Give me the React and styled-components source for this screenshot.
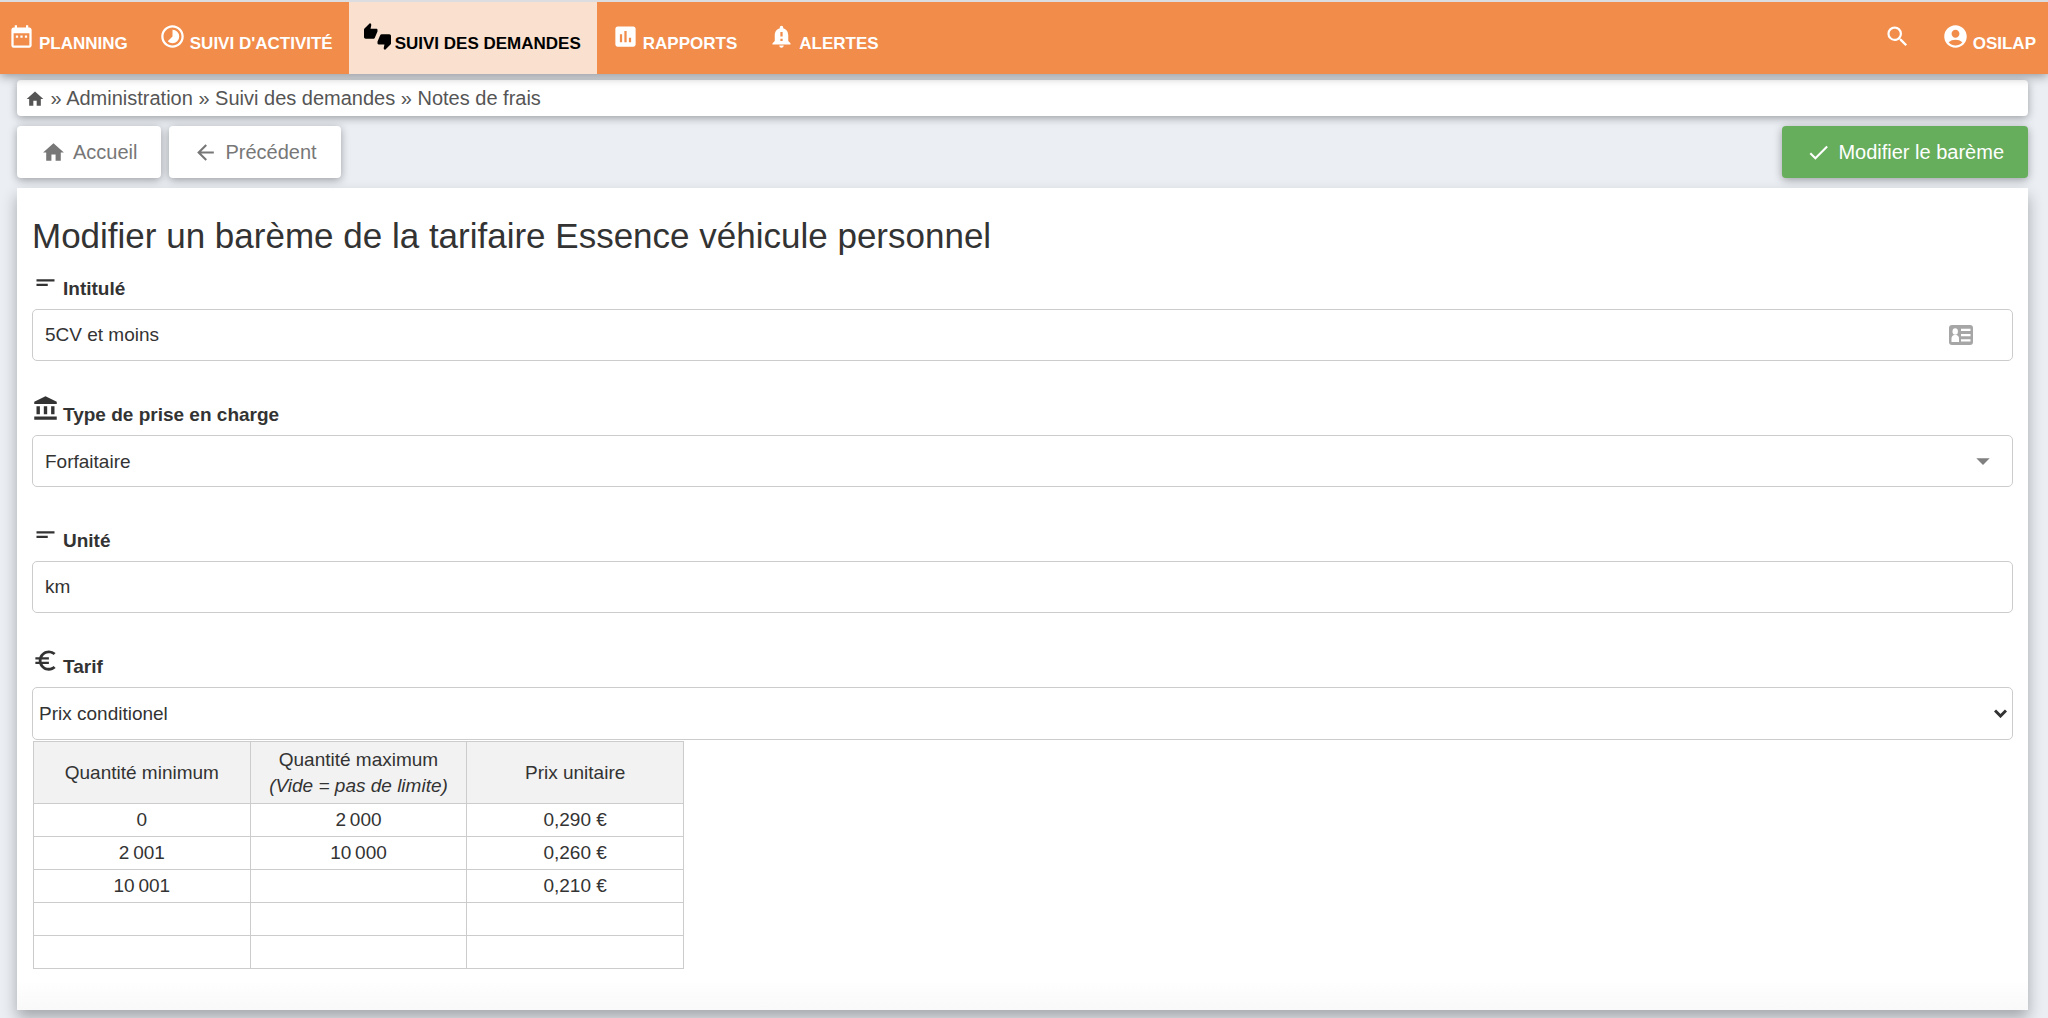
import styled, { createGlobalStyle } from 'styled-components';
import {
  MdAccountBalance,
  MdAccountCircle,
  MdArrowBack,
  MdArrowDropDown,
  MdAssessment,
  MdCheck,
  MdDateRange,
  MdEuroSymbol,
  MdHome,
  MdNotificationImportant,
  MdSearch,
  MdShortText,
  MdThumbsUpDown,
  MdTimelapse,
} from 'react-icons/md';

const GlobalStyle = createGlobalStyle`
  * {
    box-sizing: border-box;
  }

  body {
    margin: 0;
    background-color: #ebeff4;
    color: #333;
    font-family: "Liberation Sans", Arial, sans-serif;
    font-size: 19px;
    line-height: 26px;
  }
`;

const Navbar = styled.nav`
  position: relative;
  display: flex;
  justify-content: space-between;
  height: 74px;
  border-top: 2px solid #dcdde1;
  background-color: #f18c4a;
  box-shadow: 0 2px 10px rgba(0, 0, 0, 0.4);
`;

const NavLink = styled.a`
  display: flex;
  gap: 4px;
  padding: 21px 16px 0 15px;
  background-color: ${({ $active }) => ($active ? '#fae0cf' : 'transparent')};
  color: ${({ $active }) => ($active ? '#000' : '#fff')};
  font-size: 17px;
  font-weight: bold;
  line-height: 42px;
  text-decoration: none;
  text-transform: uppercase;

  svg {
    flex: none;
    width: 27px;
    height: 27px;
  }
`;

const NavGroup = styled.div`
  display: flex;

  &:first-child ${NavLink}:first-child {
    padding-left: 8px;
  }

  &:last-child ${NavLink}:last-child {
    padding-right: 12px;
  }
`;

const Page = styled.div`
  padding: 6px 20px 8px 17px;
`;

const Breadcrumb = styled.nav`
  padding: 0 8px;
  border-radius: 4px;
  background-color: #fff;
  box-shadow: 0 2px 8px rgba(0, 0, 0, 0.35);
  color: #555;
  font-size: 20px;
  line-height: 36px;

  a {
    color: inherit;
    text-decoration: none;
  }

  svg {
    width: 20px;
    height: 20px;
    vertical-align: -4px;
  }
`;

const Toolbar = styled.div`
  display: flex;
  gap: 8px;
  padding: 10px 0;
`;

const Button = styled.button`
  display: flex;
  align-items: center;
  gap: 7px;
  height: 52px;
  margin-left: ${({ $primary }) => ($primary ? 'auto' : '0')};
  padding: 0 24px;
  border: none;
  border-radius: 4px;
  background-color: ${({ $primary }) => ($primary ? '#66ad5c' : '#fff')};
  box-shadow: 0 2px 8px rgba(0, 0, 0, 0.35);
  color: ${({ $primary }) => ($primary ? '#fff' : '#777')};
  font-family: inherit;
  font-size: 20px;
  cursor: pointer;

  svg {
    width: 25px;
    height: 25px;
  }
`;

const Card = styled.main`
  padding: 25px 15px 41px;
  background: linear-gradient(to top, #f9f9f9, #fff 30px);
  box-shadow: 0 8px 14px rgba(0, 0, 0, 0.3);
`;

const Title = styled.h1`
  margin: 0 0 10px;
  font-size: 35px;
  font-weight: normal;
  line-height: 46px;
`;

const Field = styled.div`
  margin-bottom: ${({ $last }) => ($last ? '0' : '34px')};
`;

const Label = styled.label`
  display: flex;
  gap: 4px;
  font-weight: bold;
  line-height: 40px;

  svg {
    width: 27px;
    height: 27px;
  }
`;

const ControlBox = styled.div`
  position: relative;
  display: flex;
`;

const Input = styled.input`
  width: 100%;
  height: 52px;
  padding: 0 12px;
  border: 1px solid #ccc;
  border-radius: 5px;
  background-color: #fff;
  color: #333;
  font-family: inherit;
  font-size: 19px;
`;

const Select = styled.select`
  appearance: none;
  width: 100%;
  height: ${({ $native }) => ($native ? '53px' : '52px')};
  padding: 0 ${({ $native }) => ($native ? '6px' : '12px')};
  border: 1px solid #ccc;
  border-radius: 5px;
  background-color: #fff;
  color: #333;
  font-family: inherit;
  font-size: 19px;
`;

const Adornment = styled.span`
  position: absolute;
  top: 0;
  right: ${({ $right }) => $right}px;
  display: flex;
  align-items: center;
  height: 100%;
  color: ${({ $color }) => $color};
  pointer-events: none;
`;

const PriceTable = styled.table`
  width: 651px;
  margin: 1px 0 0 1px;
  border-collapse: collapse;
  table-layout: fixed;
  text-align: center;

  th,
  td {
    padding: 0;
    border: 1px solid #ccc;
    font-weight: normal;
  }

  th {
    height: 62px;
    background-color: #f2f2f2;
  }

  td {
    height: 33px;
  }
`;

const ContactCardIcon = () => (
  <svg width="24" height="20" viewBox="0 0 24 20">
    <rect width="24" height="20" rx="3" fill="#a6a6a6" />
    <g fill="#fff">
      <ellipse cx="6.200" cy="6.500" rx="2.700" ry="3.200" />
      <path d="M2.500 17v-3.500c0-2 1-3 2.500-3.500h2.500c1.500.5 2.500 1.500 2.500 3.500V17z" />
      <path d="M12 3.800h9.500v2.200H12zM12 9h9.500v2.200H12zM12 14.300h9.500v2.200H12z" />
    </g>
  </svg>
);

const Chevron = () => (
  <svg width="13" height="9" viewBox="0 0 13 9">
    <path d="M1 1.500l5.500 5.500L12 1.500" fill="none" stroke="currentColor" strokeWidth="3" />
  </svg>
);

const navItems = [
  { label: 'Planning', icon: MdDateRange },
  { label: "Suivi d'activité", icon: MdTimelapse },
  { label: 'Suivi des demandes', icon: MdThumbsUpDown, active: true },
  { label: 'Rapports', icon: MdAssessment },
  { label: 'Alertes', icon: MdNotificationImportant },
];

const rows = [
  ['0', '2\u202f000', '0,290 €'],
  ['2\u202f001', '10\u202f000', '0,260 €'],
  ['10\u202f001', '', '0,210 €'],
  ['', '', ''],
  ['', '', ''],
];

export default function App() {
  return (
    <>
      <GlobalStyle />
      <Navbar>
        <NavGroup>
          {navItems.map(({ label, icon: Icon, active }) => (
            <NavLink key={label} href="#" $active={active}>
              <Icon />
              <span>{label}</span>
            </NavLink>
          ))}
        </NavGroup>
        <NavGroup>
          <NavLink href="#" aria-label="Rechercher">
            <MdSearch />
          </NavLink>
          <NavLink href="#">
            <MdAccountCircle />
            <span>Osilap</span>
          </NavLink>
        </NavGroup>
      </Navbar>

      <Page>
        <Breadcrumb>
          <a href="#" aria-label="Accueil">
            <MdHome />
          </a>
          {' » '}
          <a href="#">Administration</a>
          {' » '}
          <a href="#">Suivi des demandes</a>
          {' » '}
          <a href="#">Notes de frais</a>
        </Breadcrumb>

        <Toolbar>
          <Button type="button">
            <MdHome />
            Accueil
          </Button>
          <Button type="button">
            <MdArrowBack />
            Précédent
          </Button>
          <Button type="submit" form="bareme" $primary>
            <MdCheck />
            Modifier le barème
          </Button>
        </Toolbar>

        <Card>
          <Title>Modifier un barème de la tarifaire Essence véhicule personnel</Title>
          <form id="bareme" onSubmit={(e) => e.preventDefault()}>
            <Field>
              <Label htmlFor="intitule">
                <MdShortText />
                Intitulé
              </Label>
              <ControlBox>
                <Input id="intitule" type="text" defaultValue="5CV et moins" />
                <Adornment $right={40} $color="#a6a6a6">
                  <ContactCardIcon />
                </Adornment>
              </ControlBox>
            </Field>

            <Field>
              <Label htmlFor="type">
                <MdAccountBalance />
                Type de prise en charge
              </Label>
              <ControlBox>
                <Select id="type">
                  <option>Forfaitaire</option>
                </Select>
                <Adornment $right={14} $color="#808080">
                  <MdArrowDropDown size={32} />
                </Adornment>
              </ControlBox>
            </Field>

            <Field>
              <Label htmlFor="unite">
                <MdShortText />
                Unité
              </Label>
              <ControlBox>
                <Input id="unite" type="text" defaultValue="km" />
              </ControlBox>
            </Field>

            <Field $last>
              <Label htmlFor="tarif">
                <MdEuroSymbol />
                Tarif
              </Label>
              <ControlBox>
                <Select id="tarif" $native>
                  <option>Prix conditionel</option>
                </Select>
                <Adornment $right={6} $color="#333">
                  <Chevron />
                </Adornment>
              </ControlBox>
            </Field>

            <PriceTable>
              <thead>
                <tr>
                  <th>Quantité minimum</th>
                  <th>
                    Quantité maximum
                    <br />
                    <em>(Vide = pas de limite)</em>
                  </th>
                  <th>Prix unitaire</th>
                </tr>
              </thead>
              <tbody>
                {rows.map((cells, i) => (
                  <tr key={i}>
                    {cells.map((cell, j) => (
                      <td key={j}>{cell}</td>
                    ))}
                  </tr>
                ))}
              </tbody>
            </PriceTable>
          </form>
        </Card>
      </Page>
    </>
  );
}
